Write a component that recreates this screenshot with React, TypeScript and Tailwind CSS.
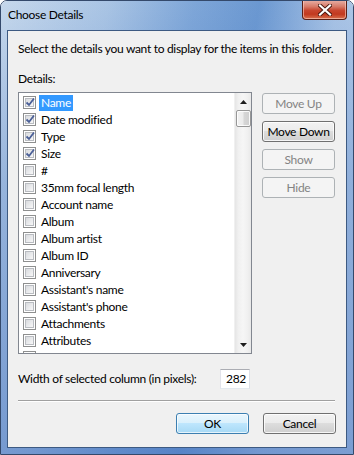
import React from "react";

const items: { label: string; checked: boolean }[] = [
  { label: "Name", checked: true },
  { label: "Date modified", checked: true },
  { label: "Type", checked: true },
  { label: "Size", checked: true },
  { label: "#", checked: false },
  { label: "35mm focal length", checked: false },
  { label: "Account name", checked: false },
  { label: "Album", checked: false },
  { label: "Album artist", checked: false },
  { label: "Album ID", checked: false },
  { label: "Anniversary", checked: false },
  { label: "Assistant's name", checked: false },
  { label: "Assistant's phone", checked: false },
  { label: "Attachments", checked: false },
  { label: "Attributes", checked: false },
  { label: "", checked: false },
];

function CheckBox({ checked }: { checked: boolean }) {
  return (
    <div className="w-[13px] h-[13px] shrink-0 border border-[#8e8f8f] bg-white p-[1px]">
      <div className="w-full h-full border border-[#b9bcc1] bg-[linear-gradient(135deg,#d9dbde_0%,#ebecee_60%,#f7f7f7_100%)] relative">
        {checked && (
          <svg className="absolute left-[-1px] top-[-2px]" width="11" height="11" viewBox="0 0 11 11">
            <path d="M1.5 5.5 L4 8 L9 1.5" fill="none" stroke="#4a5f97" strokeWidth="1.8" />
          </svg>
        )}
      </div>
    </div>
  );
}

function WinButton({
  label,
  disabled,
  isDefault,
}: {
  label: string;
  disabled?: boolean;
  isDefault?: boolean;
}) {
  if (disabled) {
    return (
      <div className="w-[73px] h-[21px] rounded-[3px] border border-[#adb2b5] bg-[#f4f4f4] flex items-center justify-center text-[#838383]">
        {label}
      </div>
    );
  }
  if (isDefault) {
    return (
      <div className="w-[73px] h-[21px] rounded-[3px] border border-[#3c7fb1] bg-[linear-gradient(180deg,#eaf6fd_0%,#d9f0fc_49%,#bee6fd_50%,#a7d9f5_100%)] shadow-[inset_0_0_0_1px_rgba(255,255,255,0.7)] flex items-center justify-center text-black">
        {label}
      </div>
    );
  }
  return (
    <div className="w-[73px] h-[21px] rounded-[3px] border border-[#707070] bg-[linear-gradient(180deg,#f2f2f2_0%,#ebebeb_49%,#dddddd_50%,#cfcfcf_100%)] shadow-[inset_0_0_0_1px_rgba(255,255,255,0.8)] flex items-center justify-center text-black">
      {label}
    </div>
  );
}

export default function App() {
  return (
    <div
      className="w-[354px] h-[455px] relative rounded-t-[7px] border border-[#34496b] overflow-hidden flex flex-col text-[12px] leading-[16px] tracking-[-0.3px] text-black"
      style={{ fontFamily: 'Lato, "Segoe UI", sans-serif' }}
    >
      {/* frame background */}
      <div className="absolute inset-0 bg-[linear-gradient(100deg,#c6d8ec_0%,#a9c4e4_25%,#7ea6d8_45%,#6b98d1_60%,#a8c3e5_78%,#bcd1ea_100%)]" />
      <div className="absolute inset-0 bg-[linear-gradient(180deg,rgba(255,255,255,0)_0%,rgba(80,125,195,0.35)_40%,rgba(70,115,190,0.55)_100%)]" />

      {/* title bar */}
      <div className="relative h-[29px] flex items-center pl-[7px] pb-[1px] text-black">
        Choose Details
      </div>

      {/* close button */}
      <div className="absolute top-[-1px] right-[6px] w-[45px] h-[20px] rounded-b-[4px] border border-[#5a1f16] border-t-0 bg-[linear-gradient(180deg,#e9b3a9_0%,#d77a68_35%,#c8452e_55%,#c2391f_75%,#d9714f_100%)] shadow-[inset_0_0_0_1px_rgba(255,220,210,0.55)] flex items-center justify-center">
        <svg width="14" height="12" viewBox="0 0 14 12">
          <path d="M2 1.5 L12 10.5 M12 1.5 L2 10.5" stroke="#4a1810" strokeWidth="4" strokeLinecap="square" />
          <path d="M2 1.5 L12 10.5 M12 1.5 L2 10.5" stroke="#ffffff" strokeWidth="2.2" strokeLinecap="square" />
        </svg>
      </div>

      {/* client area */}
      <div className="relative mx-[6px] mb-[6px] flex-1 border border-[#3d5a82] bg-[#f0f0f0] pl-[10px] pr-[10px] pt-[10px] flex flex-col">
        <div className="h-[16px] whitespace-nowrap">Select the details you want to display for the items in this folder.</div>
        <div className="mt-[14px] h-[16px]">Details:</div>

        <div className="mt-[5px] flex items-start">
          {/* list box */}
          <div className="w-[234px] h-[262px] border border-[#828790] bg-white flex overflow-hidden">
            <div className="flex-1 pt-[1px] pl-[4px] overflow-hidden">
              {items.map((it, i) => (
                <div key={i} className="h-[17px] flex items-center">
                  <CheckBox checked={it.checked} />
                  {it.label && (
                    <div
                      className={
                        i === 0
                          ? "ml-[3px] px-[2px] h-[16px] bg-[#3399ff] text-white flex items-center"
                          : "ml-[3px] px-[2px] h-[16px] flex items-center"
                      }
                    >
                      {it.label}
                    </div>
                  )}
                </div>
              ))}
            </div>
            {/* scrollbar */}
            <div className="w-[17px] h-full bg-[linear-gradient(90deg,#e5e5e5_0%,#f0f0f0_20%,#f6f6f6_50%,#f0f0f0_80%,#e8e8e8_100%)] border-l border-[#f0f0f0] flex flex-col items-center">
              <div className="h-[17px] w-full flex items-center justify-center">
                <svg width="7" height="4" viewBox="0 0 7 4">
                  <path d="M3.5 0 L7 4 L0 4 Z" fill="#1e1e1e" />
                </svg>
              </div>
              <div className="w-[15px] h-[17px] rounded-[2px] border border-[#979797] bg-[linear-gradient(90deg,#f1f1f1_0%,#ececec_45%,#d6d6d6_55%,#cfcfcf_100%)] shadow-[inset_0_0_0_1px_rgba(255,255,255,0.85)]" />
              <div className="flex-1" />
              <div className="h-[17px] w-full flex items-center justify-center">
                <svg width="7" height="4" viewBox="0 0 7 4">
                  <path d="M0 0 L7 0 L3.5 4 Z" fill="#1e1e1e" />
                </svg>
              </div>
            </div>
          </div>

          {/* side buttons */}
          <div className="ml-[10px] mt-[1px] flex flex-col gap-[7px]">
            <WinButton label="Move Up" disabled />
            <WinButton label="Move Down" />
            <WinButton label="Show" disabled />
            <WinButton label="Hide" disabled />
          </div>
        </div>

        <div className="mt-[15px] flex items-center">
          <div className="w-[202px] whitespace-nowrap">Width of selected column (in pixels):</div>
          <div className="w-[30px] h-[20px] border border-[#abadb3] border-b-[#e3e9ef] border-l-[#e2e3ea] border-r-[#dbdfe6] bg-white flex items-center justify-end pr-[3px]">
            282
          </div>
        </div>

        <div className="mt-[11px] mr-[1px] h-[2px] border-t border-[#a0a0a0] border-b border-b-white" />

        <div className="mt-[11px] flex justify-end gap-[14px]">
          <WinButton label="OK" isDefault />
          <WinButton label="Cancel" />
        </div>
      </div>
    </div>
  );
}
